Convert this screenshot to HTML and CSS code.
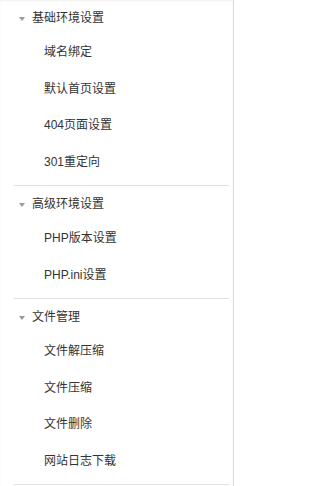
FILE: index.html
```html
<!DOCTYPE html>
<html lang="zh-CN">
<head>
<meta charset="utf-8">
<title>设置菜单</title>
<link rel="stylesheet" href="styles.css">
</head>
<body>
<nav class="sidebar">
  <section class="group">
    <div class="group-title"><span class="caret"></span>基础环境设置</div>
    <ul class="items">
      <li>域名绑定</li>
      <li>默认首页设置</li>
      <li>404页面设置</li>
      <li>301重定向</li>
    </ul>
  </section>
  <section class="group">
    <div class="group-title"><span class="caret"></span>高级环境设置</div>
    <ul class="items">
      <li>PHP版本设置</li>
      <li>PHP.ini设置</li>
    </ul>
  </section>
  <section class="group">
    <div class="group-title"><span class="caret"></span>文件管理</div>
    <ul class="items">
      <li>文件解压缩</li>
      <li>文件压缩</li>
      <li>文件删除</li>
      <li>网站日志下载</li>
    </ul>
  </section>
</nav>
</body>
</html>
```
FILE: styles.css
```css
html, body {
  margin: 0;
  padding: 0;
  background: #fff;
}
body {
  font-family: "Liberation Sans", "Noto Sans CJK SC", sans-serif;
  font-size: 12px;
  color: #333;
}
.sidebar {
  width: 233px;
  height: 486px;
  border-right: 1px solid #dcdcdc;
  box-shadow: inset 0 1px 2px rgba(0, 0, 0, 0.06);
  display: flex;
  flex-direction: column;
}
.group {
  margin: 0 4px 0 14px;
  padding-bottom: 5px;
  border-bottom: 1px solid #e0e0e0;
}
.group-title {
  height: 36px;
  line-height: 36px;
  display: flex;
  align-items: center;
  color: #333;
}
.caret {
  width: 0;
  height: 0;
  border-left: 3.5px solid transparent;
  border-right: 3.5px solid transparent;
  border-top: 4px solid #9a9a9a;
  margin: 1px 7px 0 5px;
}
.items {
  list-style: none;
  margin: -2px 0 0 0;
  padding: 0;
}
.items li {
  height: 36.5px;
  line-height: 36.5px;
  padding-left: 30px;
  color: #333;
}
```
